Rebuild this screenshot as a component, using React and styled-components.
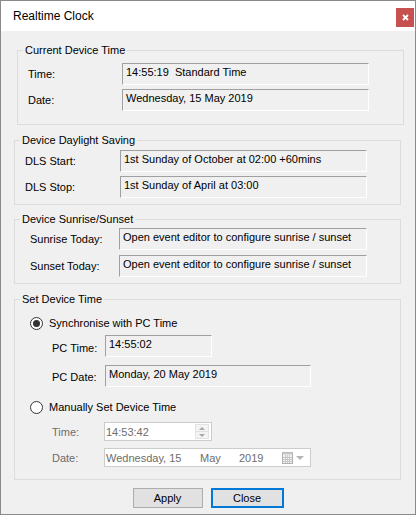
import React from "react";
import styled, { createGlobalStyle } from "styled-components";

const Global = createGlobalStyle`
  html, body { margin: 0; padding: 0; background: #ffffff; }
  body {
    font-family: "Liberation Sans", Arial, sans-serif;
    font-size: 11px;
    color: #000;
  }
  * { box-sizing: border-box; }
`;

const Window = styled.div`
  width: 416px;
  height: 515px;
  border: 1px solid #8a8a8a;
  background: #f0f0f0;
  display: flex;
  flex-direction: column;
`;

const TitleBar = styled.div`
  height: 30px;
  flex: none;
  background: #ffffff;
  display: flex;
  align-items: flex-start;
  justify-content: space-between;
  padding: 0 1px 0 12px;
`;

const Title = styled.div`
  font-size: 12px;
  line-height: 30px;
  color: #000;
`;

const CloseBtn = styled.div`
  margin-top: 7px;
  width: 18px;
  height: 19px;
  background: #c75050;
  display: flex;
  align-items: center;
  justify-content: center;
`;

const Body = styled.div`
  flex: 1;
  display: flex;
  flex-direction: column;
`;

const Group = styled.fieldset`
  margin: ${(p) => p.$mt}px 0 0 ${(p) => p.$ml}px;
  width: 387px;
  min-width: 0;
  border: 1px solid #dcdcdc;
  padding: ${(p) => p.$pad};
`;

const Legend = styled.legend`
  margin-left: 5px;
  padding: 0 2px;
  line-height: 13px;
  font-size: 11px;
  color: #000;
`;

const FormGrid = styled.div`
  display: grid;
  grid-template-columns: ${(p) => p.$label}px ${(p) => p.$field}px;
  grid-auto-rows: ${(p) => p.$rowH || 22}px;
  row-gap: ${(p) => p.$gap}px;
  padding-left: ${(p) => p.$pl || 0}px;
  margin-top: ${(p) => p.$mt || 0}px;
`;

const Label = styled.div`
  align-self: center;
  padding-top: ${(p) => p.$dy || 0}px;
  color: ${(p) => (p.$disabled ? "#6d6d6d" : "#000")};
  white-space: nowrap;
`;

const ReadField = styled.div`
  width: ${(p) => p.$w}px;
  height: 22px;
  border-top: 1px solid #a0a0a0;
  border-left: 1px solid #a0a0a0;
  border-right: 1px solid #ffffff;
  border-bottom: 1px solid #ffffff;
  background: #f0f0f0;
  padding: 2px 0 0 3px;
  line-height: 13px;
  white-space: pre;
  color: #000;
`;

const SetColumn = styled.div`
  display: flex;
  flex-direction: column;
  padding-left: 15px;
`;

const RadioRow = styled.label`
  display: flex;
  align-items: center;
  gap: 6px;
  height: 16px;
  margin-top: ${(p) => p.$mt}px;
`;

const RadioCircle = styled.span`
  width: 13px;
  height: 13px;
  border-radius: 50%;
  border: 1px solid #333;
  background: #ffffff;
  display: flex;
  align-items: center;
  justify-content: center;
  &::after {
    content: "";
    width: 7px;
    height: 7px;
    border-radius: 50%;
    background: ${(p) => (p.$checked ? "#333" : "transparent")};
  }
`;

const DisabledInput = styled.div`
  width: ${(p) => p.$w}px;
  height: 19px;
  background: #ffffff;
  border: 1px solid #cccccc;
  color: #6d6d6d;
  display: flex;
  align-items: center;
  padding-left: 1px;
  white-space: nowrap;
`;

const Spin = styled.div`
  margin-left: auto;
  margin-right: 2px;
  width: 14px;
  height: 15px;
  display: flex;
  flex-direction: column;
  border: 1px solid #e3e3e3;
  background: #f4f4f4;
`;

const SpinHalf = styled.div`
  flex: 1;
  display: flex;
  align-items: center;
  justify-content: center;
  & + & { border-top: 1px solid #e0e0e0; }
  &::after {
    content: "";
    border-left: 3px solid transparent;
    border-right: 3px solid transparent;
    ${(p) =>
      p.$up
        ? "border-bottom: 3px solid #a8a8a8;"
        : "border-top: 3px solid #a8a8a8;"}
  }
`;

const Seg = styled.span`
  display: inline-block;
  width: ${(p) => (p.$w ? `${p.$w}px` : "auto")};
`;

const PickerIcons = styled.div`
  margin-left: auto;
  margin-right: 6px;
  display: flex;
  align-items: center;
  gap: 3px;
`;

const DropArrow = styled.span`
  border-left: 4px solid transparent;
  border-right: 4px solid transparent;
  border-top: 4px solid #b5b5b5;
`;

const Footer = styled.div`
  margin-top: 8px;
  display: flex;
  justify-content: center;
  gap: 8px;
`;

const Button = styled.button`
  width: ${(p) => p.$w}px;
  height: 20px;
  padding: 0;
  font-family: "Liberation Sans", Arial, sans-serif;
  font-size: 11px;
  color: #000;
  background: #e1e1e1;
  border: ${(p) => (p.$default ? "2px solid #0078d7" : "1px solid #adadad")};
  border-radius: 0;
`;

const CalendarIcon = () => (
  <svg width="11" height="12" viewBox="0 0 11 12">
    <rect x="0.5" y="0.5" width="10" height="11" fill="#f4f4f4" stroke="#b0b0b0" />
    <rect x="0.5" y="0.5" width="10" height="2" fill="#c8c8c8" />
    <path d="M3.5 3v8M5.5 3v8M7.5 3v8M1 5.5h9M1 7.5h9M1 9.5h9" stroke="#c8c8c8" strokeWidth="1" />
  </svg>
);

const CloseGlyph = () => (
  <svg width="7" height="7" viewBox="0 0 7 7">
    <path d="M1 1L6 6M6 1L1 6" stroke="#ffffff" strokeWidth="1.8" />
  </svg>
);

export default function App() {
  return (
    <>
      <Global />
      <Window>
        <TitleBar>
          <Title>Realtime Clock</Title>
          <CloseBtn>
            <CloseGlyph />
          </CloseBtn>
        </TitleBar>
        <Body>
          <Group $mt={13} $ml={16} $pad="6px 0 13px 0">
            <Legend>Current Device Time</Legend>
            <FormGrid $label={94} $field={247} $gap={4} $pl={10}>
              <Label>Time:</Label>
              <ReadField $w={247}>{"14:55:19  Standard Time"}</ReadField>
              <Label>Date:</Label>
              <ReadField $w={247}>Wednesday, 15 May 2019</ReadField>
            </FormGrid>
          </Group>

          <Group $mt={9} $ml={13} $pad="3px 0 6px 0">
            <Legend>Device Daylight Saving</Legend>
            <FormGrid $label={95} $field={247} $gap={4} $pl={10}>
              <Label>DLS Start:</Label>
              <ReadField $w={247}>1st Sunday of October at 02:00 +60mins</ReadField>
              <Label>DLS Stop:</Label>
              <ReadField $w={247}>1st Sunday of April at 03:00</ReadField>
            </FormGrid>
          </Group>

          <Group $mt={8} $ml={13} $pad="2px 0 6px 0">
            <Legend>Device Sunrise/Sunset</Legend>
            <FormGrid $label={89} $field={248} $gap={5} $pl={15}>
              <Label>Sunrise Today:</Label>
              <ReadField $w={248}>Open event editor to configure sunrise / sunset</ReadField>
              <Label>Sunset Today:</Label>
              <ReadField $w={248}>Open event editor to configure sunrise / sunset</ReadField>
            </FormGrid>
          </Group>

          <Group $mt={9} $ml={13} $pad="0 0 12px 0">
            <Legend>Set Device Time</Legend>
            <SetColumn>
              <RadioRow $mt={9}>
                <RadioCircle $checked />
                <span>Synchronise with PC Time</span>
              </RadioRow>
              <FormGrid $label={53} $field={206} $gap={8} $pl={22} $mt={4}>
                <Label $dy={4}>PC Time:</Label>
                <ReadField $w={107}>14:55:02</ReadField>
                <Label $dy={2}>PC Date:</Label>
                <ReadField $w={206}>Monday, 20 May 2019</ReadField>
              </FormGrid>
              <RadioRow $mt={12}>
                <RadioCircle />
                <span>Manually Set Device Time</span>
              </RadioRow>
              <FormGrid $label={52} $field={207} $gap={7} $pl={22} $mt={7} $rowH={19}>
                <Label $disabled>Time:</Label>
                <DisabledInput $w={108}>
                  <span>14:53:42</span>
                  <Spin>
                    <SpinHalf $up />
                    <SpinHalf />
                  </Spin>
                </DisabledInput>
                <Label $disabled>Date:</Label>
                <DisabledInput $w={207}>
                  <Seg $w={94}>Wednesday, 15</Seg>
                  <Seg $w={39}>May</Seg>
                  <Seg>2019</Seg>
                  <PickerIcons>
                    <CalendarIcon />
                    <DropArrow />
                  </PickerIcons>
                </DisabledInput>
              </FormGrid>
            </SetColumn>
          </Group>

          <Footer>
            <Button $w={70}>Apply</Button>
            <Button $w={73} $default>Close</Button>
          </Footer>
        </Body>
      </Window>
    </>
  );
}
